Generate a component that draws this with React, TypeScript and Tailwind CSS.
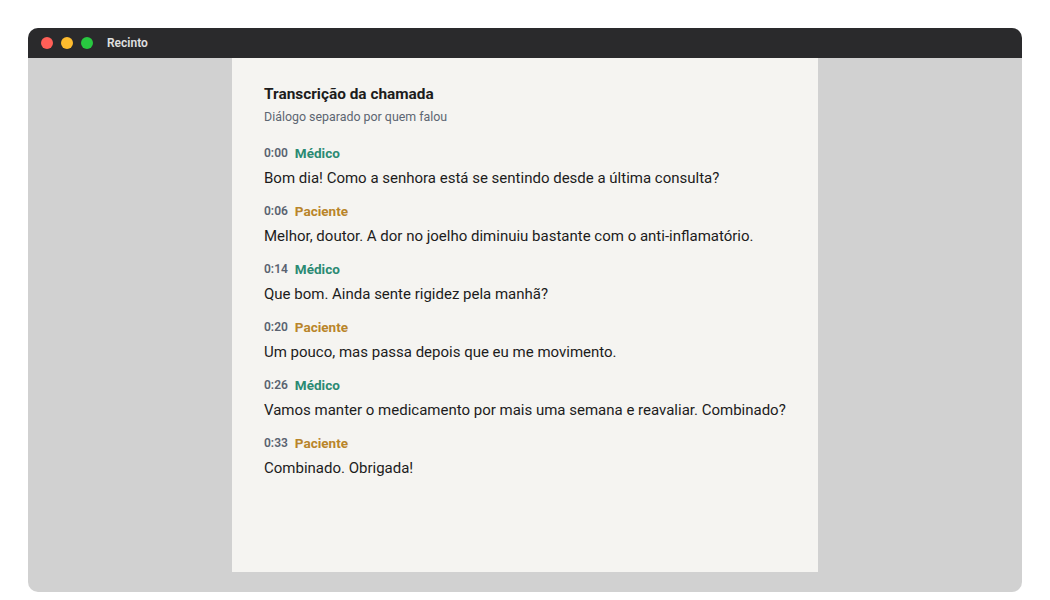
import React from "react";

type Line = {
  time: string;
  speaker: "Médico" | "Paciente";
  text: string;
};

const lines: Line[] = [
  { time: "0:00", speaker: "Médico", text: "Bom dia! Como a senhora está se sentindo desde a última consulta?" },
  { time: "0:06", speaker: "Paciente", text: "Melhor, doutor. A dor no joelho diminuiu bastante com o anti-inflamatório." },
  { time: "0:14", speaker: "Médico", text: "Que bom. Ainda sente rigidez pela manhã?" },
  { time: "0:20", speaker: "Paciente", text: "Um pouco, mas passa depois que eu me movimento." },
  { time: "0:26", speaker: "Médico", text: "Vamos manter o medicamento por mais uma semana e reavaliar. Combinado?" },
  { time: "0:33", speaker: "Paciente", text: "Combinado. Obrigada!" },
];

const App = () => {
  return (
    <div className="w-[1050px] h-[600px] bg-white p-[28px] font-['Roboto',sans-serif]">
      <div className="h-[564px] rounded-[10px] overflow-hidden flex flex-col bg-[#d1d1d1]">
        <div className="h-[30px] bg-[#2a2a2c] flex items-center px-[13px] gap-[8px] shrink-0">
          <span className="w-[12px] h-[12px] rounded-full bg-[#ff5f57]" />
          <span className="w-[12px] h-[12px] rounded-full bg-[#febc2e]" />
          <span className="w-[12px] h-[12px] rounded-full bg-[#28c840]" />
          <span className="ml-[6px] text-[12px] font-semibold text-[#e0e0e0]">Recinto</span>
        </div>
        <div className="flex justify-center">
          <div className="w-[586px] h-[514px] bg-[#f5f4f1] px-[32px] pt-[26px]">
            <h1 className="text-[15.4px] leading-[20px] font-bold text-[#1c1c1c]">
              Transcrição da chamada
            </h1>
            <p className="mt-[5px] text-[12.4px] leading-[16px] text-[#5d6672]">
              Diálogo separado por quem falou
            </p>
            <div className="mt-[19px] flex flex-col gap-[13px]">
              {lines.map((l) => (
                <div key={l.time}>
                  <div className="flex items-center gap-[7px] h-[18px] leading-[18px]">
                    <span className="text-[12px] font-semibold text-[#5a6270]">{l.time}</span>
                    <span
                      className={
                        l.speaker === "Médico"
                          ? "text-[13.5px] font-bold text-[#2b8a73]"
                          : "text-[13.5px] font-bold text-[#b9852a]"
                      }
                    >
                      {l.speaker}
                    </span>
                  </div>
                  <p className="mt-[5px] whitespace-nowrap text-[15px] leading-[22px] text-[#1c1c1c]">
                    {l.text}
                  </p>
                </div>
              ))}
            </div>
          </div>
        </div>
      </div>
    </div>
  );
};

export default App;
